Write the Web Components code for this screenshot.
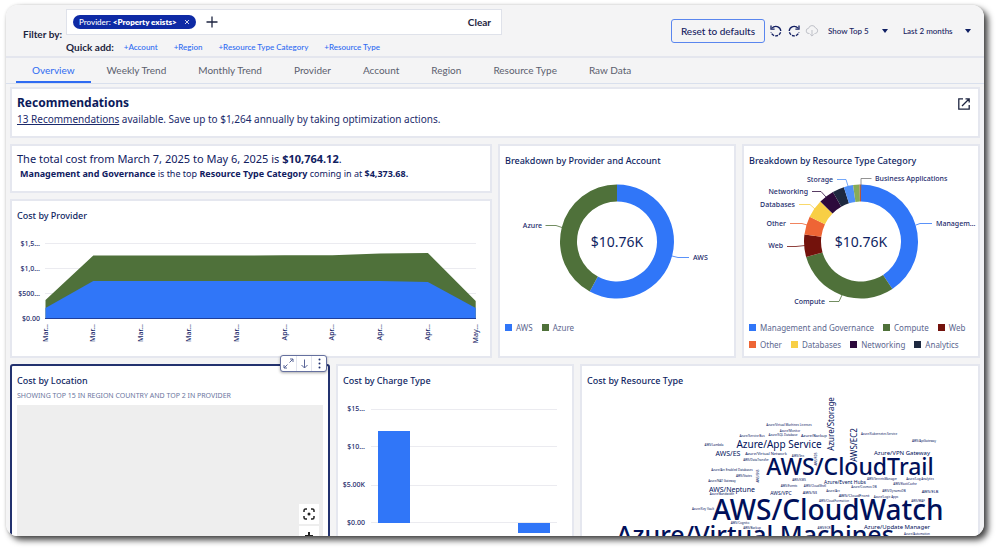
<!DOCTYPE html>
<html lang="en">
<head>
<meta charset="utf-8">
<title>Cost dashboard</title>
<style>
body{margin:0;background:#fff;font-family:"Noto Sans","Open Sans",sans-serif;color:#0f1f63}
</style>
</head>
<body>
<cost-dashboard></cost-dashboard>
<script>
const BASE = `:host,*{box-sizing:border-box}button,select{font:inherit;color:inherit;background:none;border:0;margin:0;padding:0;cursor:pointer}svg{display:block}`;
const UI = `"Lato","Open Sans",sans-serif`;
const define = (name, html) => customElements.define(name, class extends HTMLElement {
  connectedCallback() {
    if (this.shadowRoot) return;
    const root = this.attachShadow({mode: 'open'});
    const t = document.createElement('template');
    t.innerHTML = `<style>${BASE}</style>` + (typeof html === 'function' ? html(this) : html);
    root.append(t.content.cloneNode(true));
  }
});

/* Filter box with chips and quick-add links */
define('filter-bar', `<style>
:host{display:grid;grid-template-columns:max-content minmax(0,436px);column-gap:4px;align-items:center;font:10px/12px ${UI};color:#1d2440}
.lead{font-weight:700;grid-row:1/3}
.box{display:flex;align-items:center;height:26px;padding:0 10px 0 6px;background:#fff;border:1px solid #dfe2ea}
.chip{display:flex;align-items:center;gap:7px;height:14px;padding:0 6px;border-radius:7px;background:#0e2aa5;color:#fff;font-size:8px;font-weight:500;white-space:nowrap}
.chip b{font-weight:800}
.chip svg{width:6px;height:6px}
.add{margin-left:10px}
.clear{margin-left:auto;font-weight:700}
.quick{grid-column:2;display:flex;align-items:center;gap:16px;height:24px;font-size:8px;font-weight:500;color:#2e6bf2;white-space:nowrap}
.quick b{font-size:10px;color:#1d2440;margin-right:-6px}
.quick a{color:inherit;text-decoration:none}
</style>
<span class="lead">Filter by:</span>
<div class="box"><span class="chip"><span>Provider: <b>&lt;Property exists&gt;</b></span><button aria-label="Remove filter"><svg viewBox="0 0 6 6" stroke="#fff" stroke-width=".8"><path d="M1 1l4 4M5 1L1 5"/></svg></button></span>
<button class="add" aria-label="Add filter"><svg width="12" height="12" viewBox="0 0 12 12" stroke="#1d2440" stroke-width="1.3"><path d="M6 .5v11M.5 6h11"/></svg></button>
<button class="clear">Clear</button></div>
<div class="quick"><b>Quick add:</b><a href="#account">+Account</a><a href="#region">+Region</a><a href="#category">+Resource Type Category</a><a href="#type">+Resource Type</a></div>`);

define('drop-down', el => `<style>
:host{display:inline-grid;grid-template-columns:auto 7px;align-items:center;font:500 8px/12px ${UI};color:#16225f}
select{appearance:none;outline:0;grid-area:1/1/2/3;padding-right:19px}
svg{grid-area:1/2;pointer-events:none}
</style><select aria-label="${el.getAttribute('label')}"><option>${el.getAttribute('value')}</option></select>
<svg width="6" height="4" viewBox="0 0 6 4"><path fill="#0f1f63" d="M0 0h6L3 4z"/></svg>`);

define('header-actions', `<style>
:host{display:flex;align-items:center;font:10px/12px ${UI};color:#16225f}
.reset{height:24px;padding:0 9px;border:1px solid #5a86ee;border-radius:3px;font-weight:500;margin-right:3px;white-space:nowrap}
.icon{width:14px;height:14px;margin-left:1px;margin-right:3px}
drop-down{margin-left:6px}drop-down+drop-down{margin-left:14px}
</style>
<button class="reset">Reset to defaults</button>
<button class="icon" aria-label="Undo"><svg width="14" height="14" viewBox="0 0 14 14" fill="none" stroke="#142063" stroke-width="1.3"><path d="M3 4.2A5 5 0 0 1 11.8 7"/><path d="M11.6 8.3A5 5 0 0 1 2 8.2" stroke-dasharray="3 1"/><path d="M2 1.5v3.6h3.6"/></svg></button>
<button class="icon" aria-label="Redo"><svg width="14" height="14" viewBox="0 0 14 14" fill="none" stroke="#142063" stroke-width="1.3"><path d="M11 4.2A5 5 0 0 0 2.2 7"/><path d="M2.4 8.3A5 5 0 0 0 12 8.2" stroke-dasharray="3 1"/><path d="M12 1.5v3.6H8.4"/></svg></button>
<button class="icon" aria-label="Download"><svg width="14" height="14" viewBox="0 0 14 14" fill="none" stroke="#bfc1c8" stroke-width="1"><path d="M4.5 9.5H4a2.6 2.6 0 0 1-.4-5.2A3.6 3.6 0 0 1 10.500 4a2.800 2.800 0 0 1-.3 5.500H9.500M7 6v6M5.200 10.300L7 12.100l1.800-1.800"/></svg></button>
<drop-down label="Show top" value="Show Top 5"></drop-down><drop-down label="Period" value="Last 2 months"></drop-down>`);

define('tab-strip', `<style>
:host{display:flex;height:26px;padding-left:10px;border-bottom:1px solid #d9e0ed;font:10px/12px ${UI};color:#5b5e6e}
button{padding:0 16px;border-bottom:2px solid transparent;white-space:nowrap}
button[aria-selected=true]{color:#2e6bf2;border-color:#2e6bf2}
nav{display:flex}
</style><nav role="tablist">${['Overview','Weekly Trend','Monthly Trend','Provider','Account','Region','Resource Type','Raw Data'].map((t,i)=>`<button role="tab" aria-selected="${!i}">${t}</button>`).join('')}</nav>`);

/* Card frame: optional heading attribute, content through the slot */
define('dash-card', el => `<style>
:host{display:block;position:relative;min-width:0;background:#fff;border:2px solid #e5e7ef;padding:9px 5px 0}
:host([selected]){border-color:#23326f;border-radius:3px}
h2{margin:0;font-size:9px;line-height:12px;font-weight:500;color:#0f1f63;white-space:nowrap}
</style>${el.hasAttribute('heading') ? `<h2>${el.getAttribute('heading')}</h2>` : ''}<slot></slot>`);

const CHART = `<style>:host{display:block}svg{width:100%;height:auto;overflow:visible}text{font-family:"Noto Sans",sans-serif;font-size:7px;font-weight:500;fill:#1b2a6b}.grid{stroke:#ebebf0}</style>`;

define('area-chart', () => {
  const xs = Array.from({length: 10}, (_, i) => 45.5 + i * 47.8);
  const top = [300, 255.500, 255.500, 255.500, 255.500, 255.300, 255.300, 253.500, 253, 301];
  const blue = [308, 281, 281, 281, 281, 281, 281, 281, 282, 308];
  const poly = (ys, c) => `<polygon fill="${c}" points="${xs.map((x, i) => x + ',' + ys[i]).join(' ')} 475.700,318 45.500,318"/>`;
  const ticks = ['Mar…','Mar…','Mar…','Mar…','Mar…','Apr…','Apr…','Apr…','Apr…','May…'];
  return CHART + `<svg viewBox="17 222 468 134" role="img" aria-label="Cost by provider">
  <path class="grid" d="M45 243.500H476M45 268.500H476M45 293.500H476"/>${poly(top, '#4f713a')}${poly(blue, '#3076f8')}
  <path d="M45 318.500H476" stroke="#1f3f9c"/>
  ${[['$1,5…',243],['$1,0…',268],['$500…',293],['$0.00',318]].map(([t, y]) => `<text x="40" y="${y + 3}" text-anchor="end">${t}</text>`).join('')}
  ${ticks.map((t, i) => `<text transform="translate(${xs[i] + 2} 324) rotate(-90)" text-anchor="end">${t}</text>`).join('')}</svg>`;
});

define('bar-chart', CHART + `<svg viewBox="343 386 224 160" role="img" aria-label="Cost by charge type">
<path class="grid" d="M371 408.500H557M371 445.500H557M371 484.500H557M371 521.500H557"/>
<path fill="#3076f8" d="M378 430h32v92h-32zM518 522h32v10h-32z"/>
${[['$15…',407],['$10…',445],['$5.00K',483],['$0.00',521]].map(([t, y]) => `<text x="365" y="${y + 3}" text-anchor="end">${t}</text>`).join('')}</svg>`);

const DONUTS = {
  provider: {x: 505, cx: 617, slices: [[208.6,'#3076f8'],[360,'#4f713a']],
    labels: [['Azure',542,225,'end','#4f713a','M545.500 225.500H556L562 227.500'],['AWS',693,257,'start','#3076f8','M672 256L678 257.500H689']],
    legend: [['AWS','#3076f8'],['Azure','#4f713a']]},
  category: {x: 749, cx: 861, slices: [[146.6,'#3076f8'],[254.200,'#4f713a'],[277,'#73120c'],[295.700,'#ee6535'],[314.600,'#f8cf45'],[330.500,'#2d0a3c'],[342.500,'#1e2940'],[352,'#4f90f8'],[358.500,'#87ab57'],[360,'#b8573a']],
    labels: [['Storage',833,179,'end','#4f90f8','M837 179.500H846L848 186'],['Networking',808,191,'end','#2d0a3c','M812 191.500H821L826 197'],['Databases',795,204,'end','#f8cf45','M799 204.500H810L815 209'],['Other',786,223,'end','#ee6535','M790 223.500H802L807 225'],['Web',783,245,'end','#73120c','M787 246.500H796L805 245.500'],['Compute',825,301,'end','#4f713a','M829 301.500H839L842 295'],['Business Applications',875,178,'start','#777','M861 190V178.500H871.500'],['Managem…',936,223,'start','#3076f8','M916 225L920 223.500H932']],
    legend: [['Management and Governance','#3076f8'],['Compute','#4f713a'],['Web','#73120c'],['Other','#ee6535'],['Databases','#f8cf45'],['Networking','#2d0a3c'],['Analytics','#1e2940']]}
};
define('donut-chart', el => {
  const d = DONUTS[el.getAttribute('data')], cy = 241.5;
  const pt = (r, a) => { a *= Math.PI / 180; return (d.cx + r * Math.sin(a)).toFixed(2) + ' ' + (cy - r * Math.cos(a)).toFixed(2); };
  let from = 0;
  const arcs = d.slices.map(([to, c]) => {
    const e = Math.min(to, 359.99), big = +(e - from > 180);
    const p = `<path fill="${c}" d="M${pt(57, from)}A57 57 0 ${big} 1 ${pt(57, e)}L${pt(40, e)}A40 40 0 ${big} 0 ${pt(40, from)}Z"/>`;
    from = to; return p;
  }).join('');
  return CHART + `<style>ul{list-style:none;display:flex;flex-wrap:wrap;column-gap:9px;margin:0;padding:0;font-size:8px;line-height:17px;color:#5c678f}li{display:flex;align-items:center;gap:4px;white-space:nowrap}i{width:7px;height:7px}.total{font-size:14px;font-weight:400;fill:#0f1f63}</style>
  <svg viewBox="${d.x} 167 224 152" role="img" aria-label="Cost breakdown">${arcs}
  ${d.labels.map(([t, x, y, a, c, p]) => `<path d="${p}" fill="none" stroke="${c}" stroke-width=".8"/><text x="${x}" y="${y + 3}" text-anchor="${a}">${t}</text>`).join('')}
  <text class="total" x="${d.cx}" y="247" text-anchor="middle">$10.76K</text></svg>
  <ul>${d.legend.map(([t, c]) => `<li><i style="background:${c}"></i>${t}</li>`).join('')}</ul>`;
});

/* label, centre x, centre y, size, vertical */
const WORDS = [['AWS/CloudWatch',828,509,28],['AWS/CloudTrail',850,466,23],['Azure/Virtual Machines',755,534,25],['Azure/App Service',779,443,10],['Azure/Storage',831,423,8,1],['AWS/EC2',854,444,8,1],
['AWS/ES',728,452,7],['AWS/Neptune',732,488,7],['Azure/VPN Gateway',902,452,6],['Azure/Update Manager',897,526,6],['Azure/Event Hubs',845,481,5],['AWS/VPC',781,492,5],['Azure/Virtual Network',766,453,4],['Azure/Backup',814,435,4],['AWS/S3',810,492,4],['AWS/ELB',930,491,4],['AWS/CloudFront',854,495,4],
['Azure/Virtual Machines Licenses',789,424,3],['Azure/Monitor',790,430,3],['Azure/Service Bus',752,435,3],['Azure/SQL Database',783,434,3],['Azure/Kubernetes Service',879,433,3],['AWS/Lambda',714,444,3],['AWS/ApiGateway',924,440,3],['AWS/Sns',798,455,3],['AWS/DataTransfer',756,459,3],['AWS/RDS',816,458,3,1],['Azure/Arc Enabled Databases',732,469,3],['AWS/States',744,475,3],['AWS/SNS',758,475,3,1],['AWS/KMS',799,479,3],['Azure/NAT Gateway',722,480,3],['AWS/SecretsManager',882,478,3],['Azure/Log Analytics',920,478,3],['AWS/ElastiCache',905,483,3],['AWS/Events',789,485,3],['AWS/CloudShell',815,485,3],['Azure/Cosmos DB',864,486,3],['Azure/Bandwidth',722,493,3],['Azure/Arc',833,490,3],['AWS/DynamoDB',894,490,3],['Azure/Logic Apps',886,496,3],['AWS/CloudFormation',834,500,3],['AWS/WAF',918,500,3],['Azure/Key Vault',703,508,3],['AWS/Cognito',740,522,3],['AWS/Backup',752,527,3],['AWS/ECR',824,527,3],['Azure/Automation',917,533,3]];
define('word-cloud', CHART + `<svg viewBox="587 386 386 160">${WORDS.map(([t, x, y, s, v]) => `<text text-anchor="middle" style="font-size:${s}px;font-weight:${s > 20 ? 500 : 400};fill:#00105a" transform="translate(${v ? x + Math.round(s * .36) : x} ${v ? y : y + Math.round(s * .36)})${v ? ' rotate(-90)' : ''}">${t}</text>`).join('')}</svg>`);

define('map-view', `<style>
:host{display:block}
p{margin:3px 0;font-size:7px;line-height:12px;color:#6b76a0;white-space:nowrap}
.map{height:150px;background:#eee;display:flex;flex-direction:column;align-items:flex-end;gap:2px;padding:99px 4px 0 0}
.map button{display:grid;place-items:center;width:20px;height:20px;background:#fff;flex:none}
.tools{position:absolute;right:1px;top:-11px;display:flex;background:#fff;border:1px solid #65709f;border-radius:3px;box-shadow:0 1px 3px #0005}
.tools button{display:grid;place-items:center;width:15px;height:15px}
.tools button+button{border-left:1px solid #e3e5ee}
</style>
<p>SHOWING TOP 15 IN REGION COUNTRY AND TOP 2 IN PROVIDER</p>
<div class="map"><button aria-label="Fit map"><svg width="12" height="12" viewBox="0 0 12 12" fill="none" stroke="#222" stroke-width="1.5"><path d="M1 4V2.500A1.500 1.500 0 0 1 2.500 1H4M8 1h1.500A1.500 1.500 0 0 1 11 2.500V4M11 8v1.500A1.500 1.500 0 0 1 9.500 11H8M4 11H2.500A1.500 1.500 0 0 1 1 9.500V8"/><circle cx="6" cy="6" r="1.500" fill="#222" stroke="none"/></svg></button>
<button aria-label="Zoom in"><svg width="10" height="10" viewBox="0 0 10 10" stroke="#222" stroke-width="2"><path d="M5 1v8M1 5h8"/></svg></button></div>
<div class="tools"><button aria-label="Expand"><svg width="11" height="11" viewBox="0 0 11 11" fill="none" stroke="#5a6698"><path d="M6.500 4.500l3.500-3.500M7 1h3v3M4.500 6.500L1 10M1 7v3h3"/></svg></button><button aria-label="Drill down"><svg width="9" height="10" viewBox="0 0 9 10" fill="none" stroke="#5a6698"><path d="M4.500 .5v8.500M1.500 6l3 3 3-3"/></svg></button><button aria-label="More"><svg width="3" height="11" viewBox="0 0 3 11" fill="#23326f"><circle cx="1.500" cy="1.500" r="1"/><circle cx="1.500" cy="5.500" r="1"/><circle cx="1.500" cy="9.500" r="1"/></svg></button></div>`);

define('recommendation-note', `<style>
:host{display:flex;justify-content:space-between;align-items:flex-start;padding:0 3px 9px 0}
h1{margin:-3px 0 0;font-size:12px;line-height:16px;color:#0b1a5a}
p{margin:0;font-size:10px;line-height:16px;color:#1b2a6b}a{color:inherit}
</style><div><h1>Recommendations</h1><p><a href="#recommendations">13 Recommendations</a> available. Save up to $1,264 annually by taking optimization actions.</p></div>
<button aria-label="Open"><svg width="12" height="12" viewBox="0 0 12 12" fill="none" stroke="#1d2440" stroke-width="1.300"><path d="M5 .8H.8v10.400h10.400V7M7.500 .8h3.700v3.700M11 1L4 8"/></svg></button>`);

define('cost-summary', `<style>
:host{display:block;margin-top:-4px;padding-bottom:10px;color:#10205f;white-space:nowrap}
p{margin:0}.a{font-size:11px;line-height:15px}.b{font-size:9px;line-height:15px;padding-left:3px}
</style><p class="a">The total cost from March 7, 2025 to May 6, 2025 is <b>$10,764.12</b>.</p>
<p class="b"><b>Management and Governance</b> is the top <b>Resource Type Category</b> coming in at <b>$4,373.68.</b></p>`);

define('cost-dashboard', `<style>
:host{display:block;height:100vh;padding:5px 15px 15px 6px;overflow:hidden}
.frame{height:100%;overflow:hidden;border-radius:12px;background:#f4f4f5}
.shadow{height:100%;border-radius:12px;box-shadow:4px 4px 6px #000b,0 0 3px #0002}
header{display:flex;align-items:flex-start;justify-content:space-between;gap:12px;height:53px;padding:4px 12px 0 17px;border-bottom:2px solid #e4e6ee}
filter-bar{flex:1}header-actions{padding-top:10px}
main{display:grid;gap:6px;padding:3px 4px}
.row{display:grid;gap:6px}
.two{grid-template-columns:minmax(0,482fr) minmax(0,238fr) minmax(0,238fr)}
.three{grid-template-columns:minmax(0,320fr) minmax(0,238fr) minmax(0,400fr)}
.stack{display:flex;flex-direction:column;gap:6px;min-width:0}
.stack dash-card:last-child{flex:1}
</style>
<div class="shadow"><div class="frame">
<header><filter-bar></filter-bar><header-actions></header-actions></header>
<tab-strip></tab-strip>
<main>
<dash-card><recommendation-note></recommendation-note></dash-card>
<div class="row two">
<div class="stack"><dash-card><cost-summary></cost-summary></dash-card><dash-card heading="Cost by Provider"><area-chart></area-chart></dash-card></div>
<dash-card heading="Breakdown by Provider and Account"><donut-chart data="provider"></donut-chart></dash-card>
<dash-card heading="Breakdown by Resource Type Category"><donut-chart data="category"></donut-chart></dash-card>
</div>
<div class="row three">
<dash-card heading="Cost by Location" selected><map-view></map-view></dash-card>
<dash-card heading="Cost by Charge Type"><bar-chart></bar-chart></dash-card>
<dash-card heading="Cost by Resource Type"><word-cloud></word-cloud></dash-card>
</div>
</main></div></div>`);
</script>
</body>
</html>
